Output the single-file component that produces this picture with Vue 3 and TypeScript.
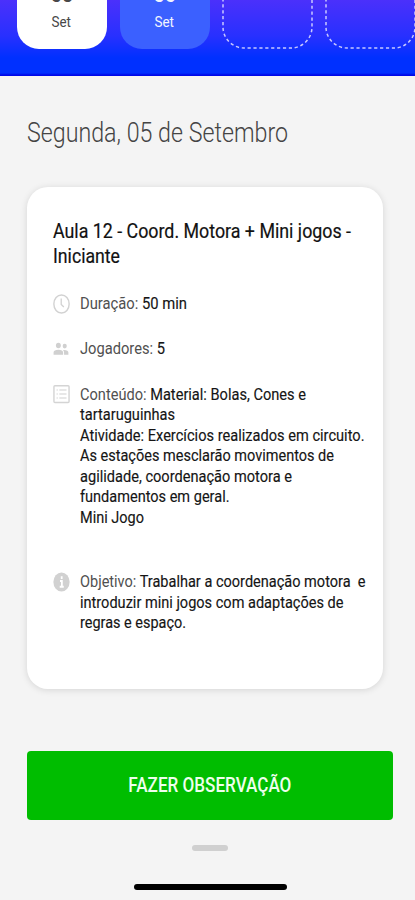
<script setup lang="ts">
type Segment = { text: string; muted?: boolean }
type Line = { width: number; parts: Segment[] }
type Detail = { icon: 'clock' | 'people' | 'list' | 'info'; lines: Line[] }

const days = [
  { number: '05', month: 'Set', kind: 'selected' },
  { number: '06', month: 'Set', kind: 'active' },
  { number: '', month: '', kind: 'empty' },
  { number: '', month: '', kind: 'empty' },
]

const plain = (text: string, width: number): Line => ({ width, parts: [{ text }] })
const labelled = (label: string, text: string, width: number): Line => ({
  width,
  parts: [{ text: label + ' ', muted: true }, { text }],
})

const title: Line[] = [
  plain('Aula 12 - Coord. Motora + Mini jogos -', 298),
  plain('Iniciante', 67),
]

const details: Detail[] = [
  { icon: 'clock', lines: [labelled('Duração:', '50 min', 107)] },
  { icon: 'people', lines: [labelled('Jogadores:', '5', 85)] },
  {
    icon: 'list',
    lines: [
      labelled('Conteúdo:', 'Material: Bolas, Cones e', 226),
      plain('tartaruguinhas', 95),
      plain('Atividade: Exercícios realizados em circuito.', 284.5),
      plain('As estações mesclarão movimentos de', 254),
      plain('agilidade, coordenação motora e', 212),
      plain('fundamentos em geral.', 149.5),
      plain('Mini Jogo', 64),
    ],
  },
  {
    icon: 'info',
    lines: [
      labelled('Objetivo:', 'Trabalhar a coordenação motora  e', 285.5),
      plain('introduzir mini jogos com adaptações de', 263.5),
      plain('regras e espaço.', 106),
    ],
  },
]

// Condenses a line horizontally to the given width.
const vFit = {
  mounted(el: HTMLElement, binding: { value: number }) {
    const natural = el.getBoundingClientRect().width
    if (natural > 0) el.style.transform = `scaleX(${binding.value / natural})`
  },
}
</script>

<template>
  <main class="screen">
    <header class="days">
      <div v-for="(day, i) in days" :key="i" class="day" :class="day.kind">
        <svg v-if="day.kind === 'empty'" class="outline" viewBox="0 0 91 80">
          <rect x="1" y="1" width="89" height="78" rx="21" fill="none" stroke="#c9c8ff" stroke-width="1.5" stroke-dasharray="3.2 2.7" />
        </svg>
        <span v-if="day.number" class="number">{{ day.number }}</span>
        <span v-if="day.month" v-fit="19.5" class="month">{{ day.month }}</span>
      </div>
    </header>

    <h1 class="date"><span v-fit="261" class="line">Segunda, 05 de Setembro</span></h1>

    <section class="card">
      <h2 class="title">
        <span v-for="(line, i) in title" :key="i" v-fit="line.width" class="line">{{ line.parts[0].text }}</span>
      </h2>

      <div v-for="item in details" :key="item.icon" class="detail" :class="item.icon">
        <svg v-if="item.icon === 'clock'" class="icon" viewBox="0 0 18 20" preserveAspectRatio="none">
          <ellipse cx="9" cy="10" rx="8.1" ry="9.1" fill="none" stroke="#d2d2d2" stroke-width="1.5" />
          <path d="M8.7 4.6v5.8l2.8 2.7" fill="none" stroke="#d2d2d2" stroke-width="1.4" />
        </svg>
        <svg v-else-if="item.icon === 'people'" class="icon" viewBox="0 0 18 20">
          <g fill="#d0d0d0">
            <ellipse cx="5.7" cy="6.4" rx="2.6" ry="2.9" />
            <ellipse cx="12.4" cy="6.9" rx="2.2" ry="2.5" />
            <path d="M.6 16.2v-2.4c0-2 2.1-3 5.1-3s5 1 5 3v2.4zM11.7 16.2v-2.4c0-1.2-.4-2.1-1.1-2.8 3.5-.3 5.7.7 5.7 2.8v2.4z" />
          </g>
        </svg>
        <svg v-else-if="item.icon === 'list'" class="icon" viewBox="0 0 18 20" preserveAspectRatio="none">
          <rect x="1" y="1.7" width="16" height="16.8" rx="1" fill="none" stroke="#d4d4d4" stroke-width="1.5" />
          <path d="M6.7 6h7.6M6.7 10h7.6M6.7 14h7.6M3.8 6h1.3M3.8 10h1.3M3.8 14h1.3" stroke="#d0d0d0" stroke-width="1.2" />
        </svg>
        <svg v-else class="icon" viewBox="0 0 18 20" preserveAspectRatio="none">
          <ellipse cx="9" cy="10" rx="8.6" ry="9.6" fill="#d1d1d1" />
          <path d="M9.2 4.2v2.7M7.4 9h2v5.6M7.1 14.8h4.3" fill="none" stroke="#fff" stroke-width="1.9" />
        </svg>
        <p class="text">
          <span v-for="(line, i) in item.lines" :key="i" v-fit="line.width" class="line"><span
            v-for="(part, j) in line.parts" :key="j" :class="{ muted: part.muted }">{{ part.text }}</span></span>
        </p>
      </div>
    </section>

    <button class="action" type="button"><span v-fit="163" class="line">FAZER OBSERVAÇÃO</span></button>
    <div class="handle"></div>
    <div class="home"></div>
  </main>
</template>

<style>
body {
  background: #f4f4f4;
}
</style>

<style scoped>
.screen {
  box-sizing: border-box;
  width: 415px;
  height: 900px;
  overflow: hidden;
  display: flex;
  flex-direction: column;
  background: #f4f4f4;
  font-family: Roboto, "Liberation Sans", sans-serif;
}

.days {
  box-sizing: border-box;
  flex: none;
  height: 76px;
  padding-left: 17px;
  display: flex;
  gap: 12.5px;
  overflow: hidden;
  background: linear-gradient(#4b30fb 0, #2830ff 36px, #0030ff 58px, #0030ff 73px, #0008e8 75px);
}

.day {
  box-sizing: border-box;
  flex: none;
  width: 90.3px;
  height: 80px;
  margin-top: -31px;
  padding-bottom: 18px;
  border-radius: 22px;
  display: flex;
  flex-direction: column;
  align-items: center;
  justify-content: flex-end;
}

.selected {
  background: #fff;
  color: #484848;
}

.active {
  background: #3b60ff;
  color: #f2f5ff;
}

.empty {
  padding: 0;
}

.outline {
  width: 91px;
  height: 80px;
}

.number {
  font-size: 20px;
  font-weight: 500;
  line-height: 20px;
  margin-bottom: 8px;
  margin-left: -1px;
  letter-spacing: -0.5px;
}

.month {
  margin-left: -1px;
  font-size: 15.5px;
  line-height: 18px;
}

.line {
  display: block;
  width: max-content;
  white-space: pre;
  transform-origin: left center;
}

.date {
  margin: 40px 0 0 27px;
  height: 34px;
  color: #444;
  font-size: 28px;
  font-weight: 300;
  line-height: 34px;
}

.card {
  box-sizing: border-box;
  flex: none;
  width: 355.5px;
  height: 501.5px;
  margin: 37px 0 0 27px;
  padding: 32px 0 0 26px;
  border-radius: 21px;
  background: #fff;
  box-shadow: 0 1px 7px rgba(0, 0, 0, 0.13);
}

.title {
  margin: 0;
  color: #111;
  font-size: 21px;
  font-weight: 400;
  line-height: 25px;
  -webkit-text-stroke: 0.2px #111;
}

.detail {
  display: flex;
  align-items: flex-start;
  gap: 10px;
  margin-top: 25px;
}

.detail.info {
  margin-top: 44px;
}

.icon {
  flex: none;
  width: 17px;
  height: 20px;
  margin-top: -0.5px;
}

.text {
  margin: 0;
  color: #151515;
  font-size: 16.5px;
  line-height: 20.45px;
  -webkit-text-stroke: 0.15px currentColor;
}

.muted {
  color: #505050;
  -webkit-text-stroke: 0;
}

.action {
  flex: none;
  width: 365.5px;
  height: 69.5px;
  margin: 62px 0 0 27px;
  padding: 0;
  border: 0;
  border-radius: 4px;
  display: flex;
  align-items: center;
  justify-content: center;
  background: #00bd00;
  color: #edffed;
  font: 500 20.5px/24px Roboto, "Liberation Sans", sans-serif;
}

.action .line {
  transform-origin: center;
}

.handle {
  flex: none;
  width: 36px;
  height: 6px;
  margin: 25px 0 0 192px;
  border-radius: 3px;
  background: #d0d0d0;
}

.home {
  flex: none;
  width: 153px;
  height: 6px;
  margin: 33px 0 0 133.5px;
  border-radius: 3px;
  background: #000;
}
</style>
